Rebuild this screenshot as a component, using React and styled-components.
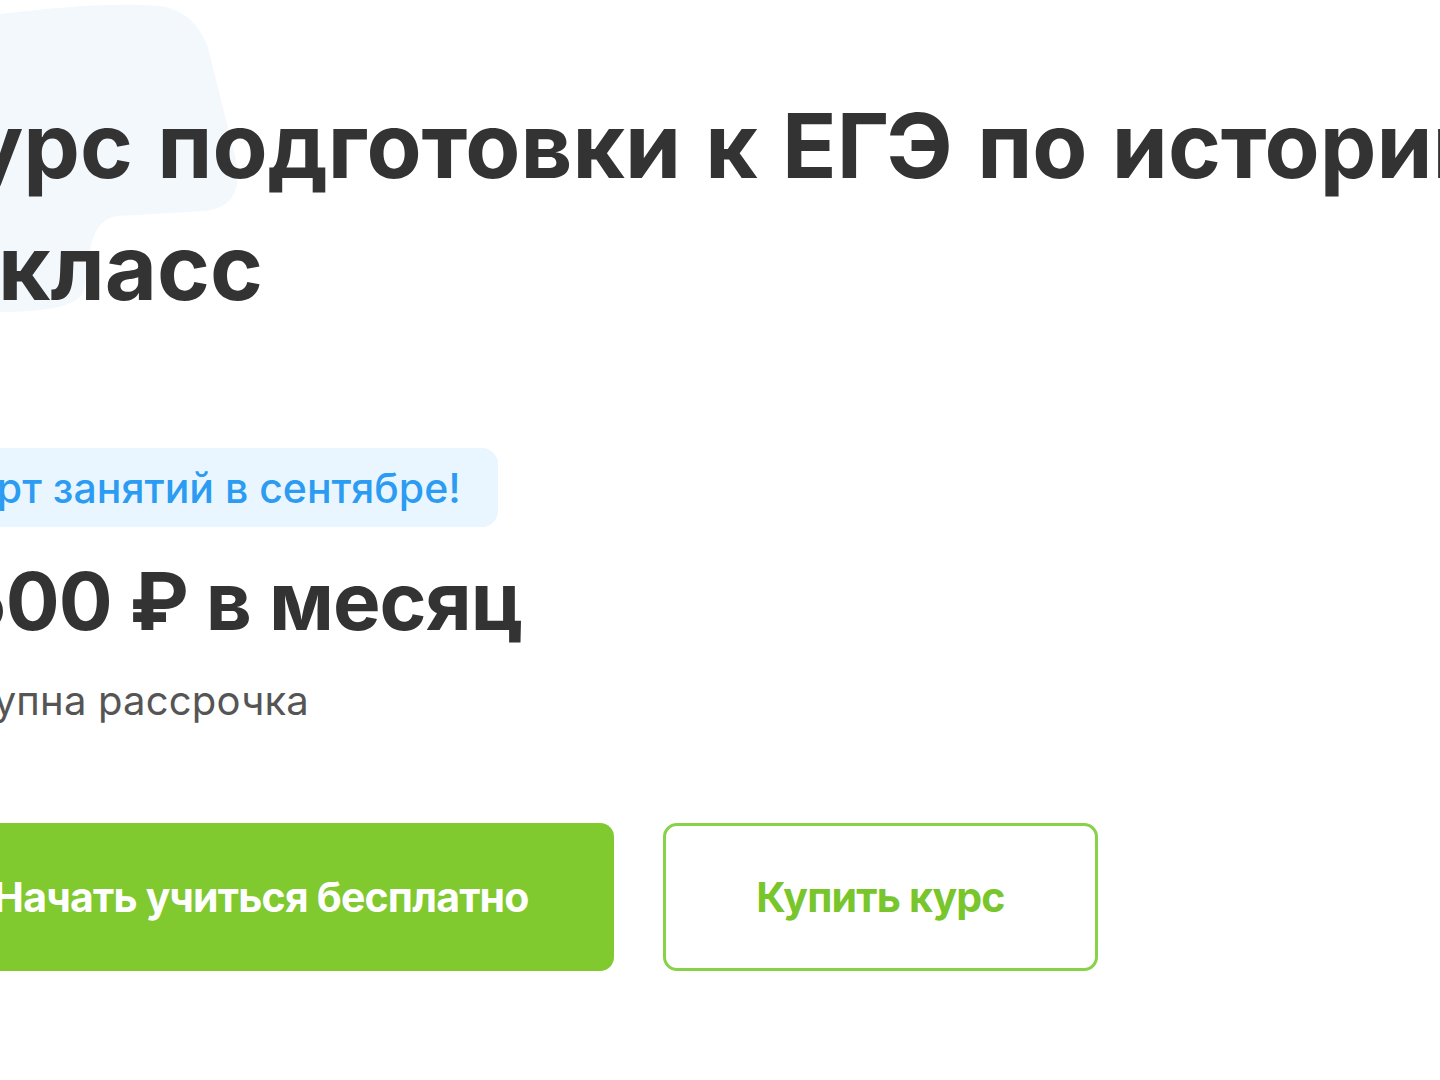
import styled, { createGlobalStyle } from "styled-components";

const GlobalStyle = createGlobalStyle`
  html, body {
    margin: 0;
    padding: 0;
    background: #ffffff;
  }
  * {
    box-sizing: border-box;
  }
`;

const Page = styled.div`
  position: relative;
  width: 1440px;
  height: 1080px;
  overflow: hidden;
  background: #ffffff;
  font-family: Inter, "Noto Sans", sans-serif;
  color: #333333;
`;

// decorative blob in the top left corner, behind the title
const Blob = styled.svg`
  position: absolute;
  left: 0;
  top: 0;
  width: 260px;
  height: 340px;
  z-index: 0;
`;

const Content = styled.div`
  position: relative;
  z-index: 1;
  display: flex;
  flex-direction: column;
  align-items: flex-start;
  margin-left: -92px;
  padding-top: 85px;
`;

const Title = styled.h1`
  margin: 0;
  font-size: 90px;
  line-height: 122px;
  font-weight: 700;
  white-space: nowrap;
  letter-spacing: 0;
  word-spacing: 3px;
  color: #333333;
`;

const Grade = styled.span`
  letter-spacing: -6px;
`;

const Badge = styled.div`
  margin-top: 119px;
  margin-left: -12px;
  height: 79px;
  display: flex;
  align-items: center;
  padding: 0 37px 0 28px;
  border-radius: 16px;
  background: #eaf6ff;
  color: #2b9cf2;
  font-size: 41px;
  font-weight: 500;
  white-space: nowrap;
`;

const Price = styled.div`
  margin-top: 19px;
  margin-left: -21px;
  font-size: 80px;
  line-height: 110px;
  font-weight: 700;
  white-space: nowrap;
  letter-spacing: -1px;
`;

const Note = styled.div`
  margin-top: 21px;
  margin-left: -14px;
  font-size: 40px;
  line-height: 48px;
  font-weight: 400;
  letter-spacing: 0.2px;
  color: #555555;
  white-space: nowrap;
`;

const Actions = styled.div`
  margin-top: 98px;
  display: flex;
  gap: 49px;
`;

const Button = styled.button`
  width: ${(p) => p.$width}px;
  height: 148px;
  border-radius: 14px;
  font-family: inherit;
  font-size: 41px;
  font-weight: 700;
  letter-spacing: -0.8px;
  cursor: pointer;
  background: ${(p) => (p.$outline ? "#ffffff" : "#80c92f")};
  color: ${(p) => (p.$outline ? "#78c52c" : "#ffffff")};
  border: ${(p) => (p.$outline ? "3px solid #88d249" : "none")};
`;

export default function App() {
  return (
    <Page>
      <GlobalStyle />
      <Blob viewBox="0 0 260 340">
        <path
          d="M0 14 C50 8 110 2 160 6 C185 10 200 25 208 48 L236 160 C242 190 232 208 205 211 L118 216 C100 218 94 232 90 250 L84 290 C80 305 50 312 0 312 Z"
          fill="#f3f8fd"
        />
      </Blob>
      <Content>
        <Title>
          Курс подготовки к ЕГЭ по истории
          <br />
          <Grade>11</Grade> класс
        </Title>
        <Badge>Старт занятий в сентябре!</Badge>
        <Price>3 500 ₽ в месяц</Price>
        <Note>Доступна рассрочка</Note>
        <Actions>
          <Button $width={706}>Начать учиться бесплатно</Button>
          <Button $width={435} $outline>
            Купить курс
          </Button>
        </Actions>
      </Content>
    </Page>
  );
}
